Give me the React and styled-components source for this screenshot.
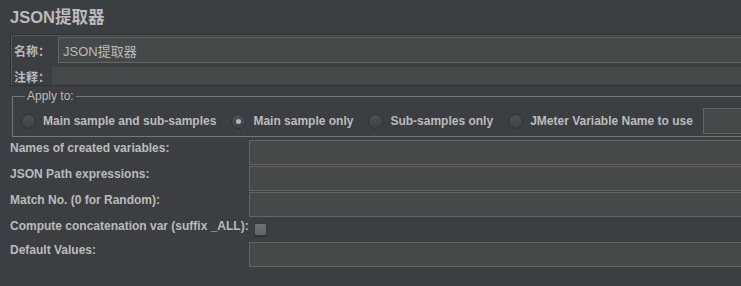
import React from "react";
import styled, { createGlobalStyle } from "styled-components";

const GlobalStyles = createGlobalStyle`
  html, body {
    margin: 0;
    padding: 0;
    background: #3c3f41;
    overflow: hidden;
  }
  body {
    font-family: "Liberation Sans", Arial, "Noto Sans CJK SC", sans-serif;
    color: #bbbbbb;
  }
`;

const Page = styled.div`
  width: 741px;
  height: 286px;
  overflow: hidden;
  padding: 7px 0 0 10px;
  box-sizing: border-box;
  background: #3c3f41;
`;

const Inner = styled.div`
  width: 770px;
`;

const Title = styled.h1`
  margin: 0;
  font-size: 16.5px;
  line-height: 20px;
  font-weight: bold;
  color: #bbbbbb;
  font-family: "Liberation Sans", Arial, "Noto Sans CJK SC", sans-serif;
`;

const NamePanel = styled.div`
  margin-top: 7px;
  border: 1px solid #2e3133;
  box-shadow: inset 1px 1px 0 #55585a;
  padding: 2px 0 0 1px;
  display: flex;
  flex-direction: column;
  gap: 4px;
`;

const NameRow = styled.div`
  display: flex;
  align-items: center;
`;

const CjkLabel = styled.span`
  width: ${(p) => p.$width}px;
  flex-shrink: 0;
  padding-left: 2px;
  box-sizing: border-box;
  font-size: 12px;
  font-weight: bold;
  font-family: "Liberation Sans", "Noto Sans CJK SC", sans-serif;
  color: #bbbbbb;
`;

const TextField = styled.div`
  flex: 1;
  height: ${(p) => p.$height}px;
  box-sizing: border-box;
  background: #45494a;
  border: ${(p) => (p.$flat ? "none" : "1px solid #646464")};
  display: flex;
  align-items: center;
  padding-left: 4px;
  font-size: 13px;
  font-family: "Liberation Sans", "Noto Sans CJK SC", sans-serif;
  color: #bbbbbb;
`;

const Group = styled.fieldset`
  margin: 3px 0 0 2px;
  padding: 5px 0 2px 8px;
  border: 1px solid #75787a;
  border-right: none;
  min-width: 0;
`;

const Legend = styled.legend`
  margin-left: 4px;
  padding: 0 2px;
  font-size: 12px;
  line-height: 14px;
  color: #bbbbbb;
`;

const RadioRow = styled.div`
  display: flex;
  align-items: center;
  height: 26px;
`;

const RadioItem = styled.label`
  display: flex;
  align-items: center;
  gap: 7px;
  margin-right: 15px;
  font-size: 12px;
  font-weight: bold;
  white-space: nowrap;
  color: #bbbbbb;
`;

const RadioDot = styled.span`
  width: 15px;
  height: 15px;
  border-radius: 50%;
  box-sizing: border-box;
  border: 1px solid #2f3133;
  background: linear-gradient(#4d5153, #3f4244);
  display: flex;
  align-items: center;
  justify-content: center;

  &::after {
    content: "";
    width: 5px;
    height: 5px;
    border-radius: 50%;
    background: ${(p) => (p.$checked ? "#b4b4b4" : "transparent")};
  }
`;

const VarField = styled.div`
  width: 80px;
  height: 26px;
  box-sizing: border-box;
  margin-left: -5px;
  background: #45494a;
  border: 1px solid #646464;
`;

const Form = styled.div`
  margin-top: 3px;
  display: grid;
  grid-template-columns: 239px 1fr;
  row-gap: 1px;
`;

const FieldLabel = styled.span`
  padding-top: 1px;
  font-size: 12px;
  line-height: 15px;
  font-weight: bold;
  white-space: nowrap;
  color: #bbbbbb;
`;

const Input = styled.div`
  height: 25px;
  box-sizing: border-box;
  background: #45494a;
  border: 1px solid #646464;
  border-right: none;
`;

const CheckCell = styled.div`
  height: 23px;
  padding: 5px 0 0 5px;
  box-sizing: border-box;
`;

const CheckBox = styled.span`
  display: block;
  width: 13px;
  height: 13px;
  box-sizing: border-box;
  border-radius: 2px;
  border: 1px solid #3a3a3a;
  background: linear-gradient(#737373, #616161);
  box-shadow: 0 1px 0 #2b2b2b;
`;

const radios = [
  { label: "Main sample and sub-samples", checked: false },
  { label: "Main sample only", checked: true },
  { label: "Sub-samples only", checked: false },
  { label: "JMeter Variable Name to use", checked: false },
];

export default function App() {
  return (
    <>
      <GlobalStyles />
      <Page>
        <Inner>
          <Title>JSON提取器</Title>
          <NamePanel>
            <NameRow>
              <CjkLabel $width={46}>名称：</CjkLabel>
              <TextField $height={26}>JSON提取器</TextField>
            </NameRow>
            <NameRow>
              <CjkLabel $width={40}>注释：</CjkLabel>
              <TextField $height={18} $flat />
            </NameRow>
          </NamePanel>
          <Group>
            <Legend>Apply to:</Legend>
            <RadioRow>
              {radios.map((r) => (
                <RadioItem key={r.label}>
                  <RadioDot $checked={r.checked} />
                  {r.label}
                </RadioItem>
              ))}
              <VarField />
            </RadioRow>
          </Group>
          <Form>
            <FieldLabel>Names of created variables:</FieldLabel>
            <Input />
            <FieldLabel>JSON Path expressions:</FieldLabel>
            <Input />
            <FieldLabel>Match No. (0 for Random):</FieldLabel>
            <Input />
            <FieldLabel>Compute concatenation var (suffix _ALL):</FieldLabel>
            <CheckCell>
              <CheckBox />
            </CheckCell>
            <FieldLabel>Default Values:</FieldLabel>
            <Input />
          </Form>
        </Inner>
      </Page>
    </>
  );
}
